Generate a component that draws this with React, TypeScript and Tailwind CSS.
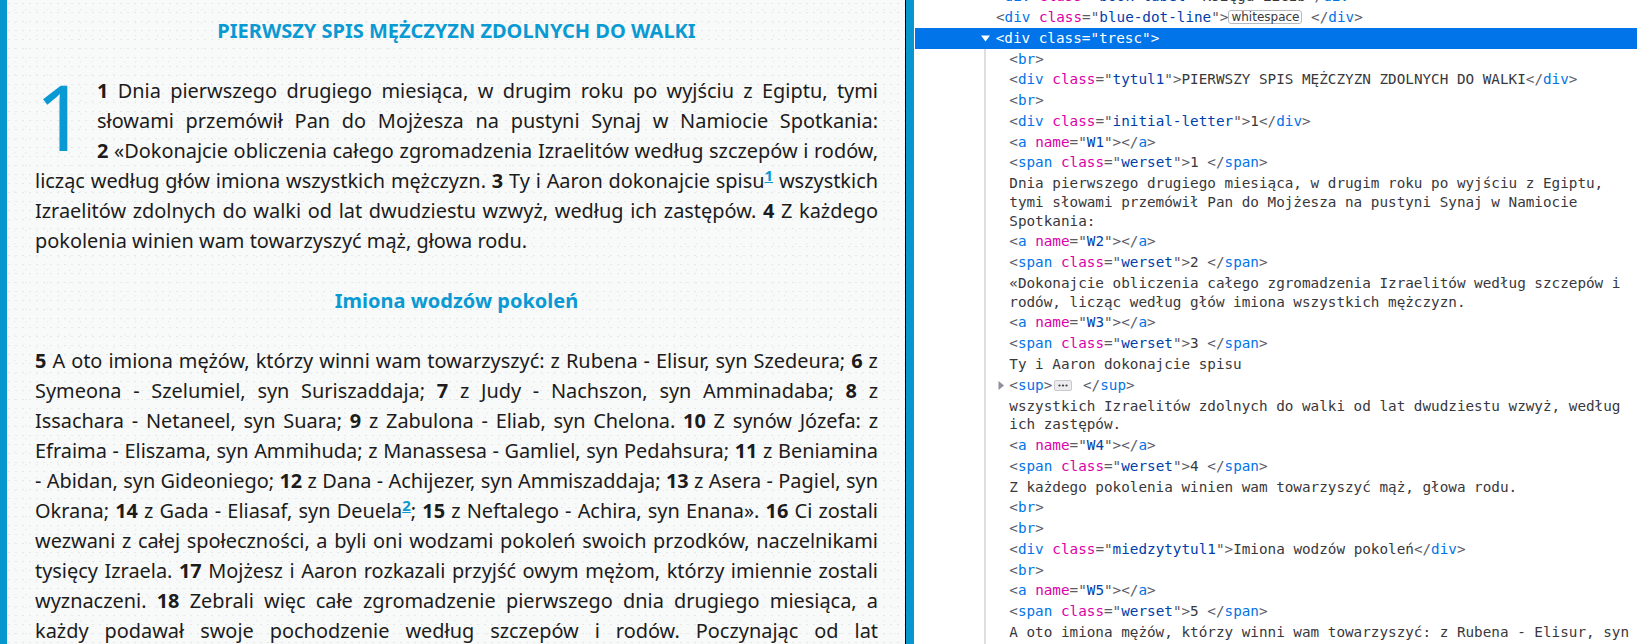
import React from "react";

type Attr = [string, string];

function P({ children, sel }: { children: React.ReactNode; sel?: boolean }) {
  return <span className={sel ? "text-white" : "text-[#5b5b66]"}>{children}</span>;
}

function Tag({
  name,
  attrs = [],
  close,
  sel,
}: {
  name: string;
  attrs?: Attr[];
  close?: boolean;
  sel?: boolean;
}) {
  return (
    <span>
      <P sel={sel}>{close ? "</" : "<"}</P>
      <span className={sel ? "text-white" : "text-[#0074e8]"}>{name}</span>
      {attrs.map(([k, v]) => (
        <React.Fragment key={k}>
          {" "}
          <span className={sel ? "text-white" : "text-[#dd00a9]"}>{k}</span>
          <P sel={sel}>="</P>
          <span className={sel ? "text-white" : "text-[#003eaa]"}>{v}</span>
          <P sel={sel}>"</P>
        </React.Fragment>
      ))}
      <P sel={sel}>&gt;</P>
    </span>
  );
}

function Txt({ children }: { children: React.ReactNode }) {
  return <span className="text-[#38383d]">{children}</span>;
}

function Row({ children, className = "" }: { children: React.ReactNode; className?: string }) {
  return (
    <div className={"whitespace-pre py-[1px] leading-[18.76px] " + className}>{children}</div>
  );
}

function TextRow({ lines }: { lines: string[] }) {
  return (
    <div className="whitespace-pre py-[1px] leading-[18.76px] text-[#38383d]">
      {lines.map((l, i) => (
        <div key={i}>{l}</div>
      ))}
    </div>
  );
}

function Anchor({ n }: { n: string }) {
  return (
    <Row>
      <Tag name="a" attrs={[["name", n]]} />
      <Tag name="a" close />
    </Row>
  );
}

function Werset({ n }: { n: string }) {
  return (
    <Row>
      <Tag name="span" attrs={[["class", "werset"]]} />
      <Txt>{n} </Txt>
      <Tag name="span" close />
    </Row>
  );
}

function BrRow() {
  return (
    <Row>
      <Tag name="br" />
    </Row>
  );
}

function Fn({ n }: { n: string }) {
  return <sup className="font-bold text-[#0a98d2] underline">{n}</sup>;
}

function V({ n }: { n: string }) {
  return (
    <>
      <b>{n}</b>
      {"\u00a0"}
    </>
  );
}

function DevTools() {
  return (
    <div className="min-w-0 flex-1 overflow-hidden bg-white font-['DejaVu_Sans_Mono',monospace] text-[14.3px]">
      <div className="-mt-[14px]">
        <Row className="pl-[82px]">
          <Tag name="div" attrs={[["class", "book-label"]]} />
          <Txt>Księga Liczb</Txt>
          <Tag name="div" close />
        </Row>
        <Row className="flex items-center pl-[82px]">
          <Tag name="div" attrs={[["class", "blue-dot-line"]]} />
          <span className="inline-flex h-[14px] items-center rounded-[3px] border border-[#b8b8c0] px-[2px] font-['DejaVu_Sans',sans-serif] text-[12px] leading-[12px] text-[#38383d]">
            whitespace
          </span>
          <span>{"\u00a0"}</span>
          <Tag name="div" close />
        </Row>
        <div className="ml-[1px] flex h-[21px] items-center whitespace-pre bg-[#0074e8] pl-[66px] leading-[18.76px]">
          <svg width="9" height="7" viewBox="0 0 9 7" className="mr-[5.7px] shrink-0">
            <path d="M0 0.5 L9 0.5 L4.5 6.5 Z" fill="#ffffff" />
          </svg>
          <Tag name="div" attrs={[["class", "tresc"]]} sel />
        </div>
        <div className="ml-[70px] border-l-2 border-[#dfdfe2] pl-[23.3px]">
          <BrRow />
          <Row>
            <Tag name="div" attrs={[["class", "tytul1"]]} />
            <Txt>PIERWSZY SPIS MĘŻCZYZN ZDOLNYCH DO WALKI</Txt>
            <Tag name="div" close />
          </Row>
          <BrRow />
          <Row>
            <Tag name="div" attrs={[["class", "initial-letter"]]} />
            <Txt>1</Txt>
            <Tag name="div" close />
          </Row>
          <Anchor n="W1" />
          <Werset n="1" />
          <TextRow
            lines={[
              "Dnia pierwszego drugiego miesiąca, w drugim roku po wyjściu z Egiptu,",
              "tymi słowami przemówił Pan do Mojżesza na pustyni Synaj w Namiocie",
              "Spotkania:",
            ]}
          />
          <Anchor n="W2" />
          <Werset n="2" />
          <TextRow
            lines={[
              "«Dokonajcie obliczenia całego zgromadzenia Izraelitów według szczepów i",
              "rodów, licząc według głów imiona wszystkich mężczyzn.",
            ]}
          />
          <Anchor n="W3" />
          <Werset n="3" />
          <TextRow lines={["Ty i Aaron dokonajcie spisu"]} />
          <Row className="-ml-[11.6px] flex items-center">
            <svg width="6" height="9" viewBox="0 0 6 9" className="mr-[5.6px] shrink-0">
              <path d="M0.5 0 L6 4.5 L0.5 9 Z" fill="#8f8f9d" />
            </svg>
            <Tag name="sup" />
            <span className="mx-[2px] inline-flex h-[11px] w-[18px] items-center justify-center rounded-[2px] border border-[#c8c8cc] bg-[#ececee]">
              <svg width="10" height="3" viewBox="0 0 10 3">
                <circle cx="1.5" cy="1.5" r="1.1" fill="#38383d" />
                <circle cx="5" cy="1.5" r="1.1" fill="#38383d" />
                <circle cx="8.5" cy="1.5" r="1.1" fill="#38383d" />
              </svg>
            </span>
            <span>{"\u00a0"}</span>
            <Tag name="sup" close />
          </Row>
          <TextRow
            lines={[
              "wszystkich Izraelitów zdolnych do walki od lat dwudziestu wzwyż, według",
              "ich zastępów.",
            ]}
          />
          <Anchor n="W4" />
          <Werset n="4" />
          <TextRow lines={["Z każdego pokolenia winien wam towarzyszyć mąż, głowa rodu."]} />
          <BrRow />
          <BrRow />
          <Row>
            <Tag name="div" attrs={[["class", "miedzytytul1"]]} />
            <Txt>Imiona wodzów pokoleń</Txt>
            <Tag name="div" close />
          </Row>
          <BrRow />
          <Anchor n="W5" />
          <Werset n="5" />
          <TextRow
            lines={[
              "A oto imiona mężów, którzy winni wam towarzyszyć: z Rubena - Elisur, syn",
              "Szedeura;",
            ]}
          />
          <Anchor n="W6" />
        </div>
      </div>
    </div>
  );
}

function Reader() {
  return (
    <div className="h-full w-[906px] shrink-0 overflow-hidden border-l-[7px] border-r border-l-[#0797cf] border-r-black bg-[#f8f9f9] bg-[radial-gradient(circle_at_30%_40%,#e6e8ea_0.6px,transparent_1px),radial-gradient(circle_at_70%_75%,#eaecee_0.6px,transparent_1px)] pl-[28px] pr-[27px] pt-[16px] font-['Noto_Sans',sans-serif] text-[19.92px] leading-[30px] text-[#1c1c1c] [background-size:7px_9px,11px_13px]">
      <div className="text-center text-[20px] font-bold text-[#0a9ad3]">
        PIERWSZY SPIS MĘŻCZYZN ZDOLNYCH DO WALKI
      </div>
      <div className="h-[30px]" />
      <p className="text-justify">
        <span className="float-left w-[62px] text-[91px] leading-[81px] text-[#0a9ad3]">1</span>
        <V n="1" />
        Dnia pierwszego drugiego miesiąca, w drugim roku po wyjściu z Egiptu, tymi słowami
        przemówił Pan do Mojżesza na pustyni Synaj w Namiocie Spotkania: <V n="2" />
        «Dokonajcie obliczenia całego zgromadzenia Izraelitów według szczepów i rodów, licząc
        według głów imiona wszystkich mężczyzn. <V n="3" />
        Ty i Aaron dokonajcie spisu
        <Fn n="1" /> wszystkich Izraelitów zdolnych do walki od lat dwudziestu wzwyż, według ich
        zastępów. <V n="4" />Z każdego pokolenia winien wam towarzyszyć mąż, głowa rodu.
      </p>
      <div className="h-[30px]" />
      <div className="text-center text-[20px] font-bold text-[#0a9ad3]">Imiona wodzów pokoleń</div>
      <div className="h-[30px]" />
      <p className="text-justify">
        <V n="5" />A oto imiona mężów, którzy winni wam towarzyszyć: z Rubena - Elisur, syn
        Szedeura; <V n="6" />z Symeona - Szelumiel, syn Suriszaddaja; <V n="7" />z Judy -
        Nachszon, syn Amminadaba; <V n="8" />z Issachara - Netaneel, syn Suara; <V n="9" />z
        Zabulona - Eliab, syn Chelona. <V n="10" />Z synów Józefa: z Efraima - Eliszama, syn
        Ammihuda; z Manassesa - Gamliel, syn Pedahsura; <V n="11" />z Beniamina - Abidan, syn
        Gideoniego; <V n="12" />z Dana - Achijezer, syn Ammiszaddaja; <V n="13" />z Asera - Pagiel,
        syn Okrana; <V n="14" />z Gada - Eliasaf, syn Deuela
        <Fn n="2" />; <V n="15" />z Neftalego - Achira, syn Enana». <V n="16" />
        Ci zostali wezwani z całej społeczności, a byli oni wodzami pokoleń swoich przodków,
        naczelnikami tysięcy Izraela. <V n="17" />
        Mojżesz i Aaron rozkazali przyjść owym mężom, którzy imiennie zostali wyznaczeni.{" "}
        <V n="18" />
        Zebrali więc całe zgromadzenie pierwszego dnia drugiego miesiąca, a każdy podawał swoje
        pochodzenie według szczepów i rodów. Poczynając od lat dwudziestu wzwyż, spisano imiona
        wszystkich, licząc według głów. <V n="19" />
        Jak Pan polecił Mojżeszowi, tak ich spisał na pustyni Synaj.
      </p>
    </div>
  );
}

export default function App() {
  return (
    <div className="flex h-[644px] w-[1637px] overflow-hidden bg-white">
      <Reader />
      <div className="h-full w-[8px] shrink-0 bg-[#0797cf]" />
      <DevTools />
    </div>
  );
}
